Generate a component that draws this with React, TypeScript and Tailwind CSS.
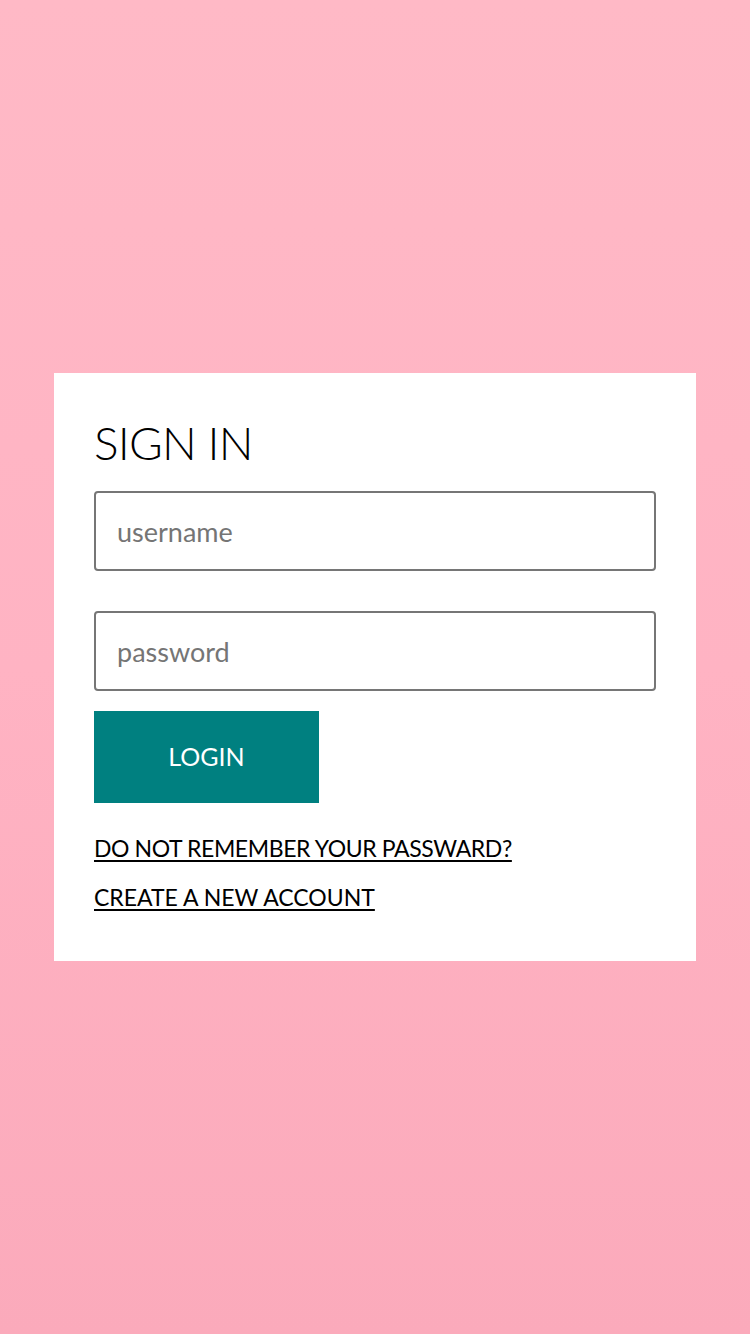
import React from "react";

const App = () => {
  return (
    <div className="min-h-[1334px] w-full flex items-center justify-center bg-gradient-to-b from-[#ffb9c6] via-[#ffb3c3] to-[#fbaabb] font-['Lato',sans-serif]">
      <div className="w-[642px] h-[588px] bg-white px-10 pt-[40px]">
        <h1 className="text-[46px] leading-[60px] font-light text-black tracking-[-0.8px]">SIGN IN</h1>
        <div className="mt-[18px] flex flex-col">
          <input
            className="h-20 w-full border-2 border-[#767676] rounded-[4px] px-[21px] text-[27px] text-black placeholder:text-[#757575] outline-none"
            placeholder="username"
          />
          <input
            type="password"
            className="mt-10 h-20 w-full border-2 border-[#767676] rounded-[4px] px-[21px] text-[27px] text-black placeholder:text-[#757575] outline-none"
            placeholder="password"
          />
          <button className="mt-5 h-[92px] w-[225px] bg-[#008080] text-white text-[25px]">LOGIN</button>
        </div>
        <div className="mt-[30px] flex flex-col gap-[18px] text-[23px] leading-[31px] text-black">
          <a href="#" className="underline underline-offset-[3px] decoration-2 w-fit tracking-[-0.4px]">DO NOT REMEMBER YOUR PASSWARD?</a>
          <a href="#" className="underline underline-offset-[3px] decoration-2 w-fit">CREATE A NEW ACCOUNT</a>
        </div>
      </div>
    </div>
  );
};

export default App;
